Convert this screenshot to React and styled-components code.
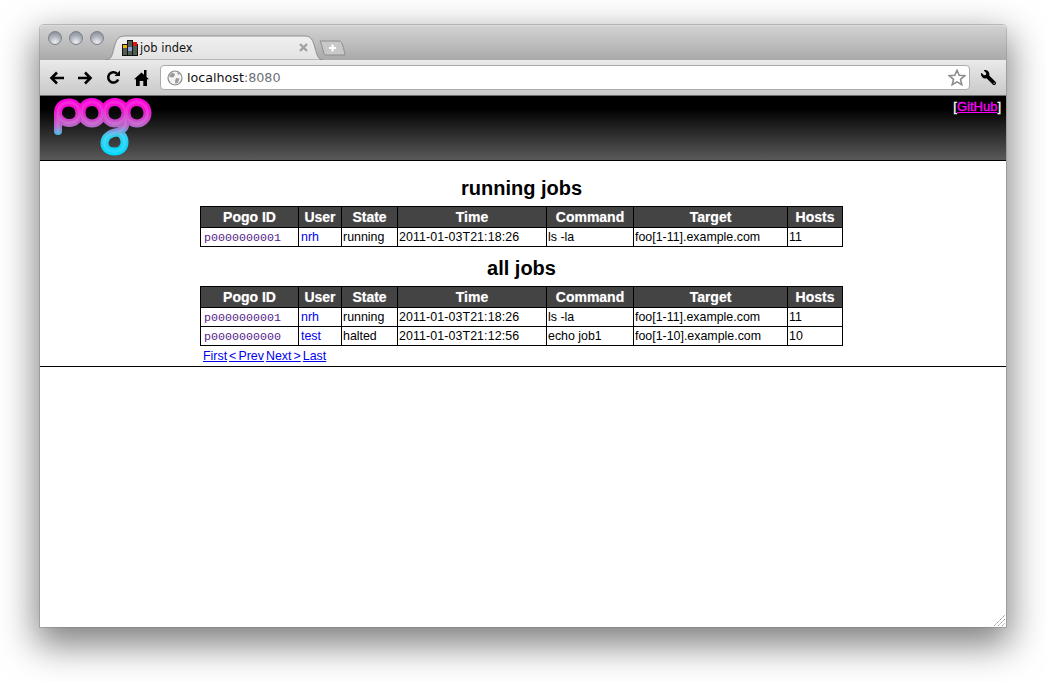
import styled, { createGlobalStyle } from "styled-components";
import { FaWrench } from "react-icons/fa";

const GlobalStyle = createGlobalStyle`
  html, body {
    margin: 0;
    padding: 0;
    background: #fff;
  }
`;

const Page = styled.div`
  height: 682px;
  box-sizing: border-box;
  padding: 25px 40px 55px;
  overflow: hidden;
  background: #fff;
`;

const Window = styled.div`
  position: relative;
  height: 602px;
  display: flex;
  flex-direction: column;
  background: #fff;
  border-radius: 4px 4px 0 0;
  box-shadow: 0 0 0 1px rgba(120, 120, 120, 0.4), 0 14px 36px 4px rgba(0, 0, 0, 0.5);
`;

const TitleBar = styled.div`
  height: 35px;
  flex: none;
  display: flex;
  align-items: flex-end;
  background: linear-gradient(#d2d2d2, #aaaaaa);
  border-radius: 4px 4px 0 0;
  border-top: 1px solid #dcdcdc;
  box-sizing: border-box;
`;

const Lights = styled.div`
  display: flex;
  gap: 7px;
  padding: 0 0 15px 8px;
`;

const Light = styled.span`
  width: 14px;
  height: 14px;
  border-radius: 50%;
  box-sizing: border-box;
  border: 1px solid #7d818b;
  background: radial-gradient(circle at 50% 85%, #eef0f4 0%, #b0b4bd 50%, #7f838c 100%);
`;

const Tab = styled.div`
  position: relative;
  width: 218px;
  height: 25px;
  margin-left: 1px;
  display: flex;
  align-items: center;
  padding: 0 15px 0 17px;
  box-sizing: border-box;
`;

const TabShape = styled.svg`
  position: absolute;
  left: 0;
  top: 0;
`;

const Favicon = styled.svg`
  position: relative;
  flex: none;
`;

const TabTitle = styled.span`
  position: relative;
  flex: 1;
  margin-left: 2px;
  font: 11.5px "DejaVu Sans", sans-serif;
  color: #111;
`;

const TabClose = styled.svg`
  position: relative;
  flex: none;
`;

const NewTab = styled.svg`
  flex: none;
  margin: 0 0 4px -4px;
`;

const Toolbar = styled.div`
  height: 36px;
  flex: none;
  display: flex;
  align-items: center;
  padding-left: 3px;
  box-sizing: border-box;
  background: linear-gradient(#eaeaea, #c9c9c9);
  border-bottom: 1px solid #6f6f6f;
`;

const NavButton = styled.div`
  width: 28px;
  height: 24px;
  flex: none;
  display: flex;
  align-items: center;
  justify-content: center;
`;

const Omnibox = styled.div`
  flex: 1;
  height: 25px;
  margin-left: 5px;
  display: flex;
  align-items: center;
  padding: 0 3px 0 6px;
  background: #fff;
  border: 1px solid #aaa;
  border-radius: 4px;
  box-sizing: border-box;
`;

const Url = styled.div`
  flex: 1;
  margin-left: 4px;
  font: 12.7px "DejaVu Sans", sans-serif;
  color: #111;

  span {
    color: #6b6f76;
  }
`;

const WrenchSlot = styled.div`
  width: 36px;
  flex: none;
  display: flex;
  justify-content: center;
  color: #000;
`;

const Banner = styled.header`
  height: 65px;
  flex: none;
  display: flex;
  justify-content: space-between;
  box-sizing: border-box;
  padding-left: 10px;
  background: linear-gradient(#000 0%, #000 20%, #5a5a5a 100%);
  border-bottom: 1px solid #000;
`;

const Logo = styled.svg`
  display: block;
`;

const GithubNote = styled.div`
  padding: 3px 5px 0 0;
  font: 13px "Liberation Sans", Arial, sans-serif;
  line-height: 16px;
  color: #fff;
  -webkit-text-stroke: 0.3px currentColor;

  a {
    color: #f0f;
  }
`;

const Content = styled.main`
  flex: none;
  width: 643px;
  margin-left: 160px;
  font: 12.4px "Liberation Sans", Arial, sans-serif;
`;

const Heading = styled.h2`
  margin: 0;
  height: ${(p) => p.$height}px;
  padding-top: ${(p) => p.$top}px;
  box-sizing: border-box;
  text-align: center;
  font: bold 20px/24px "Liberation Sans", Arial, sans-serif;
  color: #000;
`;

const JobTable = styled.table`
  width: 642px;
  table-layout: fixed;
  border-collapse: collapse;
`;

const HeadCell = styled.th`
  box-sizing: border-box;
  width: ${(p) => p.$width}px;
  height: 21px;
  padding: 0;
  background: #444;
  border: 1px solid #000;
  color: #fff;
  font: bold 14px "Liberation Sans", Arial, sans-serif;
  text-align: center;
  text-shadow: 0 0 1px rgba(255, 255, 255, 0.5);
`;

const Cell = styled.td`
  height: 18px;
  padding: 0 1px;
  border: 1px solid #000;
  color: #000;
  white-space: nowrap;
  overflow: hidden;
`;

const TimeCell = styled(Cell)`
  letter-spacing: 0.1px;
`;

const JobId = styled.a`
  margin-left: 2px;
  font: 11.67px "Liberation Mono", "Courier New", monospace;
  color: #551a8b;
  text-decoration: none;
`;

const UserLink = styled.a`
  margin-left: 1px;
  color: #00e;
  text-decoration: none;
`;

const Pager = styled.nav`
  display: flex;
  gap: 2px;
  padding: 2px 0 0 3px;
  height: 20px;
  box-sizing: border-box;
  line-height: 16px;
  word-spacing: -1.3px;

  a {
    color: #00e;
    text-decoration: underline;
  }
`;

const Rule = styled.div`
  flex: none;
  border-top: 1px solid #000;
`;

const Grip = styled.svg`
  position: absolute;
  right: 0;
  bottom: 0;
`;

const columns = [
  ["Pogo ID", 98],
  ["User", 43],
  ["State", 56],
  ["Time", 149],
  ["Command", 87],
  ["Target", 154],
  ["Hosts", 55],
];

const jobOne = {
  id: "p0000000001",
  user: "nrh",
  state: "running",
  time: "2011-01-03T21:18:26",
  command: "ls -la",
  target: "foo[1-11].example.com",
  hosts: 11,
};

const jobZero = {
  id: "p0000000000",
  user: "test",
  state: "halted",
  time: "2011-01-03T21:12:56",
  command: "echo job1",
  target: "foo[1-10].example.com",
  hosts: 10,
};

function Jobs({ jobs }) {
  return (
    <JobTable>
      <thead>
        <tr>
          {columns.map(([name, width]) => (
            <HeadCell key={name} $width={width}>
              {name}
            </HeadCell>
          ))}
        </tr>
      </thead>
      <tbody>
        {jobs.map((job) => (
          <tr key={job.id}>
            <Cell>
              <JobId href="#">{job.id}</JobId>
            </Cell>
            <Cell>
              <UserLink href="#">{job.user}</UserLink>
            </Cell>
            <Cell>{job.state}</Cell>
            <TimeCell>{job.time}</TimeCell>
            <Cell>{job.command}</Cell>
            <Cell>{job.target}</Cell>
            <Cell>{job.hosts}</Cell>
          </tr>
        ))}
      </tbody>
    </JobTable>
  );
}

const pogoPath =
  "M18 39 V21 C18 14 23 10.5 29 10.5 C35 10.5 39.5 15 39.5 21 C39.5 27 35 31 29 31 C24 31 20 28 18 23 " +
  "M41.5 21 C41.5 14 46 10 52 10 C58 10 62.5 15 62.5 21 C62.5 27 58 31.5 52 31.5 C46 31.5 41.5 27 41.5 21 " +
  "M64.5 21 C64.5 14 69 10 75 10 C81 10 85.5 15 85.5 21 C85.5 27 81 31.5 75 31.5 C69 31.5 64.5 27 64.5 21 " +
  "M86.5 21 C86.5 14 91 10 97 10 C103 10 107.5 15 107.5 21 C107.5 27 103 31.5 97 31.5 C91 31.5 86.5 27 86.5 21 " +
  "M85.5 21 V31 C85.5 36 82 38 78 40 C70 41 64.5 45 64.5 51 C64.5 56.5 69 59.5 74.5 59.5 C80.5 59.5 84.5 56 84.5 50 C84.5 45 82 42 78 40";

function PogoLogo() {
  return (
    <Logo width="105" height="64" viewBox="10 4 105 64">
      <defs>
        <linearGradient id="pogoFill" gradientUnits="userSpaceOnUse" x1="0" y1="6" x2="0" y2="62">
          <stop offset="0" stopColor="#ff00dd" />
          <stop offset="0.2" stopColor="#f010d0" />
          <stop offset="0.5" stopColor="#b868c8" />
          <stop offset="0.68" stopColor="#30d0f0" />
          <stop offset="1" stopColor="#00d8ff" />
        </linearGradient>
        <filter id="pogoSoft">
          <feGaussianBlur stdDeviation="0.5" />
        </filter>
      </defs>
      <g filter="url(#pogoSoft)">
        <path d={pogoPath} fill="none" stroke="url(#pogoFill)" strokeWidth="8" strokeLinecap="round" />
        <path d={pogoPath} fill="none" stroke="#fff" strokeOpacity="0.12" strokeWidth="3" strokeLinecap="round" />
      </g>
    </Logo>
  );
}

export default function App() {
  return (
    <Page>
      <GlobalStyle />
      <Window>
        <TitleBar>
          <Lights>
            <Light />
            <Light />
            <Light />
          </Lights>
          <Tab>
            <TabShape width="218" height="25" viewBox="0 0 218 25">
              <defs>
                <linearGradient id="tabFill" x1="0" y1="0" x2="0" y2="1">
                  <stop offset="0" stopColor="#f0f0f0" />
                  <stop offset="1" stopColor="#e2e2e2" />
                </linearGradient>
              </defs>
              <path
                d="M0 25 C7 25 7 20 9 13 C11 5 13 1 20 1 H200 C206 1 208 5 210 13 C212 20 213 25 218 25 Z"
                fill="url(#tabFill)"
                stroke="#8f8f8f"
              />
            </TabShape>
            <Favicon width="16" height="16" viewBox="0 0 16 16">
              <rect x="0.5" y="4.5" width="5" height="11" fill="#4e5f50" stroke="#111" />
              <rect x="5.5" y="0.5" width="5" height="15" fill="#4e5f50" stroke="#111" />
              <rect x="10.5" y="4.5" width="5" height="11" fill="#4e5f50" stroke="#111" />
              <rect x="1" y="5" width="4" height="3" fill="#f5b400" />
              <rect x="6" y="7" width="4" height="4" fill="#8f9fe0" />
              <rect x="11" y="2" width="4" height="4" fill="#e81010" />
            </Favicon>
            <TabTitle>job index</TabTitle>
            <TabClose width="9" height="9" viewBox="0 0 9 9">
              <path d="M1 1 L8 8 M8 1 L1 8" stroke="#a2a2a2" strokeWidth="2.4" />
            </TabClose>
          </Tab>
          <NewTab width="27" height="16" viewBox="0 0 27 16">
            <path
              d="M1 1 H20 C22 1 23 3 24 6 C25 10 26 14 26 15 H7 C5 15 5 13 4 10 C3 6 2 3 1 1 Z"
              fill="#c8c8c8"
              stroke="#8c8c8c"
            />
            <path d="M13.5 4.5 V11.5 M10 8 H17" stroke="#fff" strokeWidth="2.2" />
          </NewTab>
        </TitleBar>
        <Toolbar>
          <NavButton>
            <svg width="16" height="14" viewBox="0 0 16 14">
              <path d="M15 7 H3 M8 1.5 L2.5 7 L8 12.5" fill="none" stroke="#000" strokeWidth="2.6" />
            </svg>
          </NavButton>
          <NavButton>
            <svg width="16" height="14" viewBox="0 0 16 14">
              <path d="M1 7 H13 M8 1.5 L13.5 7 L8 12.5" fill="none" stroke="#000" strokeWidth="2.6" />
            </svg>
          </NavButton>
          <NavButton>
            <svg width="15" height="15" viewBox="0 0 15 15">
              <path d="M12.2 9.5 A5.2 5.2 0 1 1 11 3.6" fill="none" stroke="#000" strokeWidth="2.5" />
              <path d="M8.5 6 H14 V0.5 Z" fill="#000" />
            </svg>
          </NavButton>
          <NavButton>
            <svg width="15" height="16" viewBox="0 0 15 16">
              <path
                d="M7.5 2.5 L10 4.8 V0 H12.5 V7 L15 9.2 H13 V16 H9.3 V11 H5.7 V16 H2 V9.2 H0 Z"
                fill="#000"
              />
            </svg>
          </NavButton>
          <Omnibox>
            <svg width="16" height="16" viewBox="0 0 16 16">
              <circle cx="8" cy="8" r="7" fill="#f4f4f4" stroke="#8a8a8a" strokeWidth="1.2" />
              <path d="M5 2.5 L8 4 L7 7 L4 7.5 L2 6 Z M9 8 L12.5 8.5 L11 12.5 L8.5 14 L8 11 Z M10 2 L13 4 L11 5 Z" fill="#9a9a9a" />
            </svg>
            <Url>
              localhost<span>:8080</span>
            </Url>
            <svg width="18" height="17" viewBox="0 0 18 17">
              <path
                d="M9 1.3 L11.2 6.3 L16.7 6.8 L12.5 10.4 L13.8 15.7 L9 12.9 L4.2 15.7 L5.5 10.4 L1.3 6.8 L6.8 6.3 Z"
                fill="#fff"
                stroke="#8c8c8c"
                strokeWidth="1.6"
              />
            </svg>
          </Omnibox>
          <WrenchSlot>
            <FaWrench size={15} style={{ transform: "scaleX(-1)" }} />
          </WrenchSlot>
        </Toolbar>
        <Banner>
          <PogoLogo />
          <GithubNote>
            [<a href="#">GitHub</a>]
          </GithubNote>
        </Banner>
        <Content>
          <Heading $height={45} $top={15}>
            running jobs
          </Heading>
          <Jobs jobs={[jobOne]} />
          <Heading $height={39} $top={9}>
            all jobs
          </Heading>
          <Jobs jobs={[jobOne, jobZero]} />
          <Pager>
            <a href="#">First</a>
            <a href="#">&lt; Prev</a>
            <a href="#">Next &gt;</a>
            <a href="#">Last</a>
          </Pager>
        </Content>
        <Rule />
        <Grip width="13" height="13" viewBox="0 0 13 13">
          <path d="M1 12 L12 1 M5 12 L12 5 M9 12 L12 9" stroke="#999" strokeWidth="1" strokeDasharray="1.5 0.6" />
        </Grip>
      </Window>
    </Page>
  );
}
